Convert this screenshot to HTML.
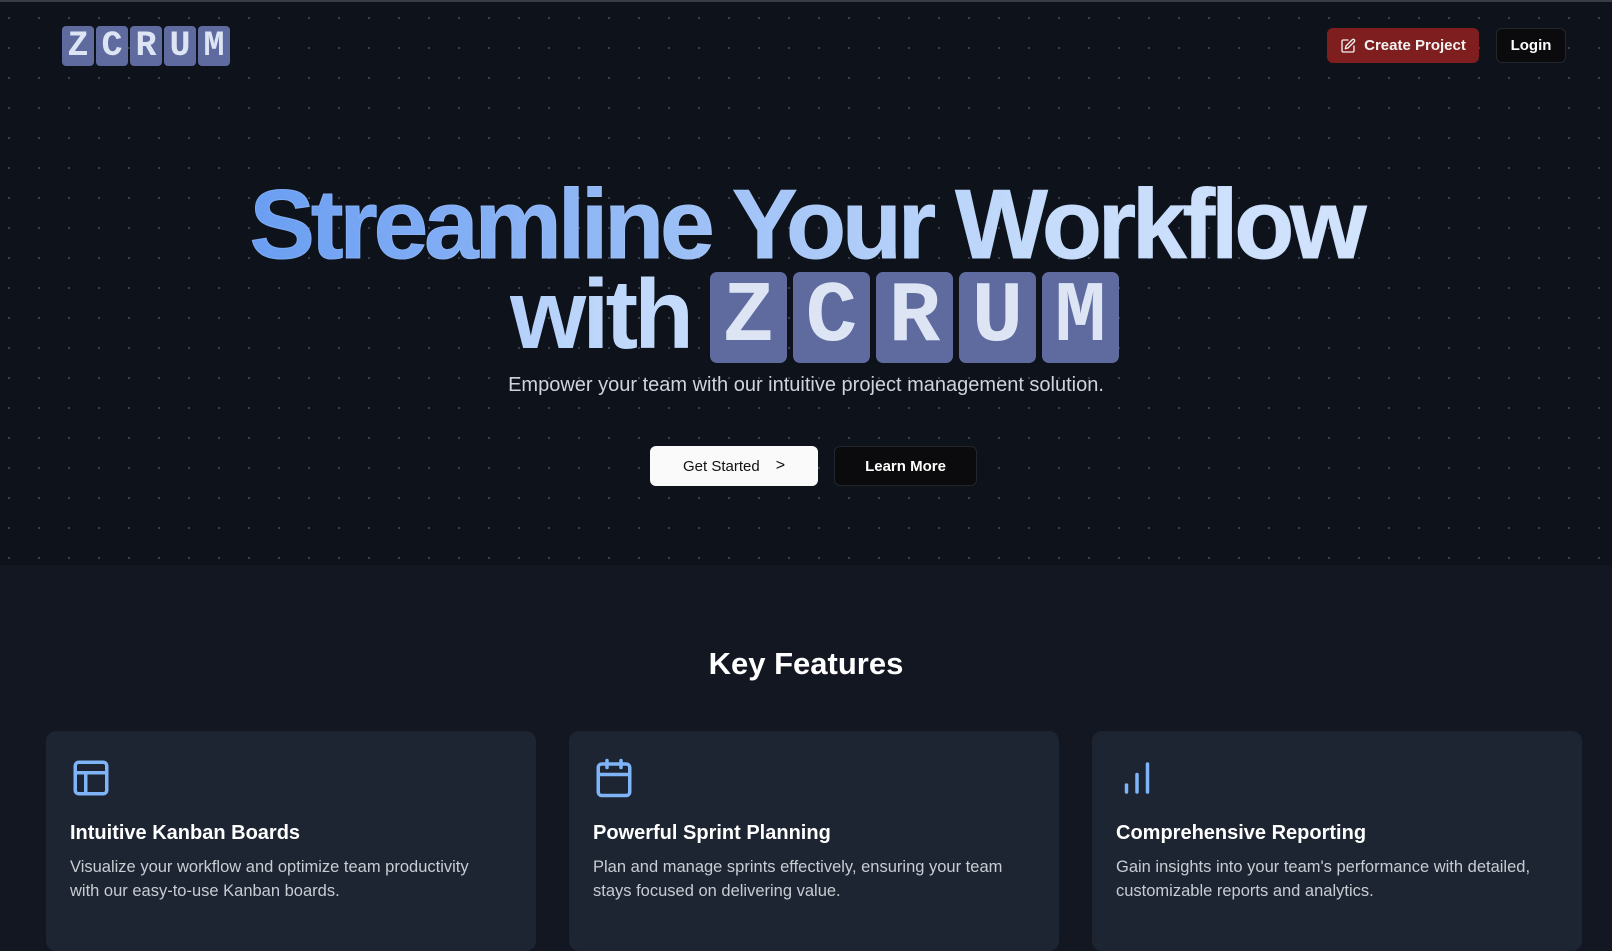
<!DOCTYPE html>
<html><head><meta charset="utf-8"><style>
*{margin:0;padding:0;box-sizing:border-box}
body{width:1612px;height:921px;overflow:hidden;background:#121722;font-family:"Liberation Sans",sans-serif;position:relative}
.hero{position:absolute;left:0;top:0;width:1612px;height:565px;background-color:#0e121b;background-image:radial-gradient(circle,#3a4150 1px,transparent 1.3px);background-size:30px 30px;background-position:-6px 1px;border-top:2px solid #3a3d44}
.abs{position:absolute}
.logo{left:62px;top:26px;display:flex;gap:2px}
.logo span{width:32px;height:40px;background:#5f6b9f;border-radius:4px;color:#dde5f5;font:bold 35px/40px "Liberation Mono",monospace;text-align:center}
.btn{position:absolute;border-radius:6px;font-weight:bold;font-size:15px;display:flex;align-items:center;justify-content:center}
h1{position:absolute;left:0;width:1612px;text-align:center;font-size:98px;font-weight:bold;letter-spacing:-4px;line-height:100px;background:linear-gradient(90deg,#4f8cf0 0%,#8db5f5 35%,#c6dcfb 65%,#dce9fd 100%);-webkit-background-clip:text;background-clip:text;color:transparent;-webkit-text-stroke:1px rgba(180,210,250,0.25)}
.big{display:flex;gap:6px}
.big span{width:77px;height:91px;background:#5f6b9f;border-radius:7px;color:#dde5f5;font:bold 86px/91px "Liberation Mono",monospace;text-align:center}
.card{position:absolute;top:731px;width:490px;height:220px;background:#1e2532;border-radius:10px}
.card h3{position:absolute;left:24px;top:91px;color:#fff;font-size:20px;font-weight:bold}
.card p{position:absolute;left:24px;top:124px;width:425px;color:#c8ccd3;font-size:16.5px;line-height:24px}
.card svg{position:absolute;left:24px;top:26px}
</style></head><body>
<div class="hero"></div>
<div class="abs logo"><span>Z</span><span>C</span><span>R</span><span>U</span><span>M</span></div>
<div class="btn" style="left:1327px;top:28px;width:152px;height:35px;background:#7f1e1e;color:#f3f3f3"><svg width="16" height="16" viewBox="0 0 24 24" fill="none" stroke="#f3f3f3" stroke-width="2" stroke-linecap="round" stroke-linejoin="round" style="margin-right:8px"><path d="M12 3H5a2 2 0 0 0-2 2v14a2 2 0 0 0 2 2h14a2 2 0 0 0 2-2v-7"/><path d="M18.4 2.6a2.1 2.1 0 0 1 3 3L12 15l-4 1 1-4z"/></svg>Create Project</div>
<div class="btn" style="left:1496px;top:28px;width:70px;height:35px;background:#0b0b0d;border:1px solid #23262d;color:#fff">Login</div>
<h1 style="top:174px">Streamline Your Workflow</h1>
<div class="abs" style="left:510px;top:264px;display:flex;align-items:center;gap:20px">
<span style="font-size:98px;font-weight:bold;letter-spacing:-4px;line-height:100px;background:linear-gradient(90deg,#b4d0fa,#c6dcfb);-webkit-background-clip:text;background-clip:text;color:transparent">with</span>
<div class="big" style="margin-top:6px"><span>Z</span><span>C</span><span>R</span><span>U</span><span>M</span></div></div>
<div class="abs" style="left:0;width:1612px;top:374px;text-align:center;color:#d0d4da;font-size:20px">Empower your team with our intuitive project management solution.</div>
<div class="btn" style="left:650px;top:446px;width:168px;height:40px;background:#fafafa;color:#111;font-weight:normal">Get Started<span style="margin-left:16px;font-size:16px">&gt;</span></div>
<div class="btn" style="left:834px;top:446px;width:143px;height:40px;background:#0b0b0d;border:1px solid #23262d;color:#fff">Learn More</div>
<div class="abs" style="left:0;width:1612px;top:646px;text-align:center;color:#fff;font-size:31px;font-weight:bold">Key Features</div>
<div class="card" style="left:46px"><svg width="42" height="42" viewBox="0 0 24 24" fill="none" stroke="#7fb4f8" stroke-width="2" stroke-linecap="round" stroke-linejoin="round"><rect x="3" y="3" width="18" height="18" rx="2"/><path d="M3 9h18M9 21V9"/></svg><h3>Intuitive Kanban Boards</h3><p>Visualize your workflow and optimize team productivity with our easy-to-use Kanban boards.</p></div>
<div class="card" style="left:569px"><svg width="42" height="42" viewBox="0 0 24 24" fill="none" stroke="#7fb4f8" stroke-width="2" stroke-linecap="round" stroke-linejoin="round"><rect x="3" y="4" width="18" height="18" rx="2"/><path d="M16 2v4M8 2v4M3 10h18"/></svg><h3>Powerful Sprint Planning</h3><p>Plan and manage sprints effectively, ensuring your team stays focused on delivering value.</p></div>
<div class="card" style="left:1092px"><svg width="42" height="42" viewBox="0 0 24 24" fill="none" stroke="#7fb4f8" stroke-width="2" stroke-linecap="round" stroke-linejoin="round"><path d="M18 20V4M12 20V10M6 20v-4"/></svg><h3>Comprehensive Reporting</h3><p>Gain insights into your team's performance with detailed, customizable reports and analytics.</p></div>
</body></html>
